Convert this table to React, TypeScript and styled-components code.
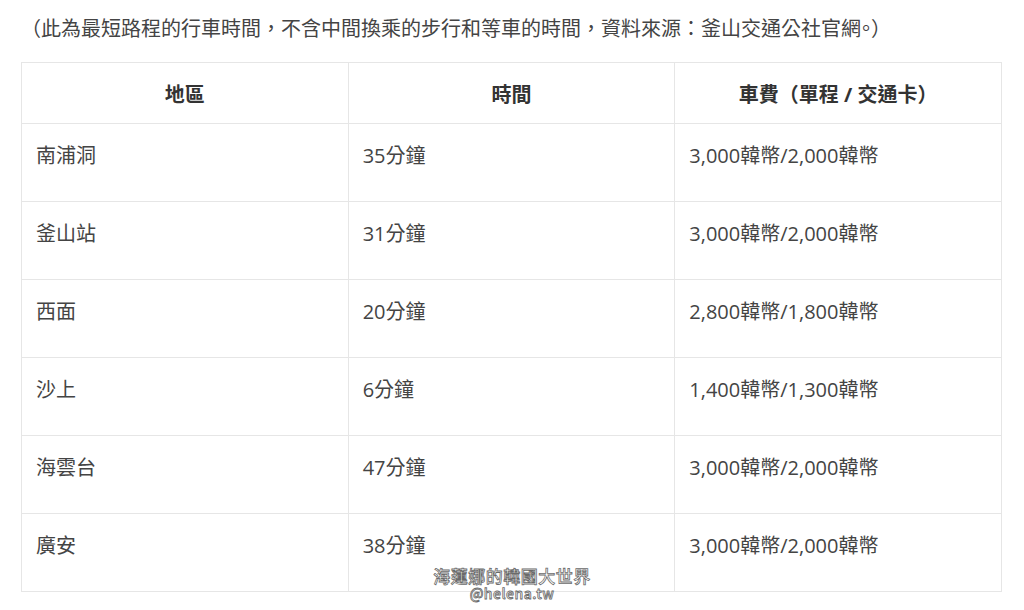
import React from "react";
import styled, { createGlobalStyle } from "styled-components";

const Global = createGlobalStyle`
  html, body { margin: 0; padding: 0; background: #fff; }
  body { font-family: "Open Sans", "Noto Sans CJK TC", sans-serif; color: #444; }
`;

const Page = styled.div`
  position: relative;
  padding: 13px 22px 0 21px;
  width: 1024px;
  height: 610px;
  box-sizing: border-box;
  overflow: hidden;
`;

const Note = styled.p`
  margin: 0 0 17px 10px;
  font-size: 20px;
  line-height: 32px;
  color: #444;
`;

const HalfPunct = styled.span`
  font-feature-settings: "halt";
`;

const Table = styled.table`
  width: 981px;
  border-collapse: collapse;
  table-layout: fixed;
`;

const HeadCell = styled.th`
  height: 61px;
  border: 1px solid #e6e6e6;
  font-weight: 700;
  font-size: 20px;
  color: #333;
  text-align: center;
  vertical-align: middle;
  padding: 0 14px;
  box-sizing: border-box;
`;

const Cell = styled.td`
  height: 78px;
  border: 1px solid #e6e6e6;
  font-size: 20px;
  line-height: 30px;
  color: #444;
  vertical-align: top;
  padding: 17px 14px 0 14px;
  box-sizing: border-box;
`;

const Watermark = styled.div`
  position: absolute;
  left: 0;
  right: 0;
  top: 567px;
  display: flex;
  flex-direction: column;
  align-items: center;
  gap: 1px;
  pointer-events: none;
`;

const MarkLine = styled.span<{ $size: number }>`
  font-family: "Noto Sans CJK TC", sans-serif;
  font-size: ${(p) => p.$size}px;
  line-height: ${(p) => p.$size + 1}px;
  color: #fff;
  -webkit-text-stroke: 0.8px #6a6a6a;
  letter-spacing: 0.5px;
  font-weight: 500;
`;

const rows = [
  ["南浦洞", "35分鐘", "3,000韓幣/2,000韓幣"],
  ["釜山站", "31分鐘", "3,000韓幣/2,000韓幣"],
  ["西面", "20分鐘", "2,800韓幣/1,800韓幣"],
  ["沙上", "6分鐘", "1,400韓幣/1,300韓幣"],
  ["海雲台", "47分鐘", "3,000韓幣/2,000韓幣"],
  ["廣安", "38分鐘", "3,000韓幣/2,000韓幣"],
];

export default function App() {
  return (
    <>
      <Global />
      <Page>
        <Note>
          <HalfPunct>（</HalfPunct>此為最短路程的行車時間，不含中間換乘的步行和等車的時間，資料來源：釜山交通公社官網<HalfPunct>。</HalfPunct>）
        </Note>
        <Table>
          <thead>
            <tr>
              <HeadCell>地區</HeadCell>
              <HeadCell>時間</HeadCell>
              <HeadCell>車費（單程 / 交通卡）</HeadCell>
            </tr>
          </thead>
          <tbody>
            {rows.map((r) => (
              <tr key={r[0]}>
                {r.map((c, i) => (
                  <Cell key={i}>{c}</Cell>
                ))}
              </tr>
            ))}
          </tbody>
        </Table>
        <Watermark>
          <MarkLine $size={17}>海蓮娜的韓國大世界</MarkLine>
          <MarkLine $size={14}>@helena.tw</MarkLine>
        </Watermark>
      </Page>
    </>
  );
}
